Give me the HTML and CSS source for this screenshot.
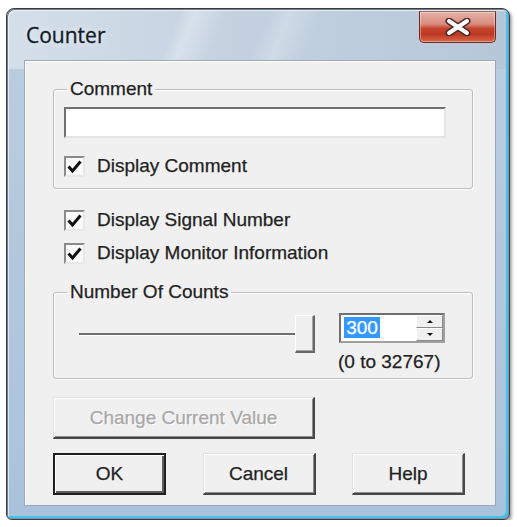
FILE: index.html
```html
<!DOCTYPE html>
<html>
<head>
<meta charset="utf-8">
<link rel="stylesheet" href="styles.css">
</head>
<body>
<div class="window">
  <div class="titlebar">
    <span class="title">Counter</span>
    <div class="close">
      <svg width="26" height="18" viewBox="0 0 26 18">
        <path d="M4 3 L22 15 M22 3 L4 15" stroke="#4a2a26" stroke-width="7" stroke-linecap="round" fill="none"/>
        <path d="M4 3 L22 15 M22 3 L4 15" stroke="#ffffff" stroke-width="4" stroke-linecap="round" fill="none"/>
      </svg>
    </div>
  </div>
  <div class="client">
    <fieldset class="group group-comment">
      <legend>Comment</legend>
      <div class="textbox"></div>
      <label class="check check-first"><span class="box"><svg width="17" height="17" viewBox="0 0 17 17"><path d="M2.5 8.5 L6.5 13 L14.5 3.5" stroke="#111" stroke-width="3" fill="none"/></svg></span>Display Comment</label>
    </fieldset>
    <label class="check row-signal"><span class="box"><svg width="17" height="17" viewBox="0 0 17 17"><path d="M2.5 8.5 L6.5 13 L14.5 3.5" stroke="#111" stroke-width="3" fill="none"/></svg></span>Display Signal Number</label>
    <label class="check row-monitor"><span class="box"><svg width="17" height="17" viewBox="0 0 17 17"><path d="M2.5 8.5 L6.5 13 L14.5 3.5" stroke="#111" stroke-width="3" fill="none"/></svg></span>Display Monitor Information</label>
    <fieldset class="group group-counts">
      <legend>Number Of Counts</legend>
      <div class="counts-row">
        <div class="slider"><div class="track"></div><div class="thumb"></div></div>
        <div class="spin-col">
          <div class="spin">
            <div class="value"><span class="sel">300</span></div>
            <div class="spin-btns"><div class="spin-up"></div><div class="spin-down"></div></div>
          </div>
          <div class="range">(0 to 32767)</div>
        </div>
      </div>
    </fieldset>
    <div class="btn disabled wide">Change Current Value</div>
    <div class="btn-row">
      <div class="btn default">OK</div>
      <div class="btn">Cancel</div>
      <div class="btn">Help</div>
    </div>
  </div>
</div>
</body>
</html>
```
FILE: styles.css
```css
html, body {
  margin: 0;
  background: #fff;
}
body {
  font-family: "Liberation Sans", Arial, sans-serif;
  font-size: 19px;
  color: #222;
  -webkit-text-stroke: 0.25px #222;
}
.window {
  margin: 8px 0 0 6px;
  width: 504px;
  height: 512px;
  box-sizing: border-box;
  border: 1px solid #3c3c3c;
  border-radius: 8px 8px 6px 6px;
  padding: 0 13px 13px 17px;
  display: flex;
  flex-direction: column;
  background:
    linear-gradient(112deg, rgba(255,255,255,0) 0 33%, rgba(255,255,255,.30) 36%, rgba(255,255,255,0) 42%, rgba(255,255,255,0) 50%, rgba(255,255,255,.22) 54%, rgba(255,255,255,0) 60%) 0 0 / 100% 60px no-repeat,
    linear-gradient(to right, #d4dfe9 0%, #c4d2e0 45%, #b6c7d9 100%) 0 0 / 100% 60px no-repeat,
    linear-gradient(to bottom, #bccddf 0%, #a9c2dc 100%);
  box-shadow:
    inset 1px 1px 0 #6f7c8a,
    inset 2px 2px 0 rgba(255,255,255,.6),
    inset -1px -1px 0 #7e97b3,
    inset -3px -3px 0 #3fc3ea,
    2px 2px 3px rgba(0,0,0,.35);
}
.titlebar {
  height: 51px;
  flex: none;
  display: flex;
  align-items: flex-start;
  justify-content: space-between;
}
.title {
  margin: 12px 0 0 2px;
  font-family: "Open Sans", "Noto Sans", sans-serif;
  font-size: 21px;
  line-height: 28px;
  color: #101a28;
  -webkit-text-stroke: 0.3px #101a28;
  text-shadow: 0 0 6px rgba(255,255,255,.9);
}
.close {
  width: 77px;
  height: 32px;
  margin-top: 2px;
  box-sizing: border-box;
  border: 1px solid #6b2c24;
  border-top-color: #9a6a62;
  border-radius: 0 0 5px 5px;
  background: linear-gradient(to bottom, #e6b0a6 0%, #d98d7e 40%, #c5432e 55%, #bf3a24 75%, #d8694b 100%);
  box-shadow: inset 0 0 0 1px rgba(255,255,255,.35);
  display: flex;
  align-items: center;
  justify-content: center;
}
.client {
  flex: 1;
  border: 1px solid #9aa8b8;
  background: #f0f0f0;
  box-shadow: inset 1px 1px 0 #fff;
  padding: 17px 22px 0 28px;
  display: flex;
  flex-direction: column;
  align-items: flex-start;
}
.group {
  margin: 0;
  width: 420px;
  box-sizing: border-box;
  border: 1px solid #bcbcbc;
  border-radius: 3px;
  box-shadow: 1px 1px 0 #fff, inset 1px 1px 0 #fff;
  padding: 0 10px 11px 10px;
}
.group legend {
  padding: 0 3px;
  margin-left: 3px;
  line-height: 22px;
}
.textbox {
  margin-top: 7px;
  width: 382px;
  height: 31px;
  box-sizing: border-box;
  background: #fff;
  border: 2px solid;
  border-color: #707070 #e4e4e4 #e4e4e4 #707070;
}
.check {
  display: flex;
  align-items: center;
  height: 22px;
  line-height: 22px;
  gap: 12px;
}
.check-first {
  margin-top: 17px;
}
.box {
  width: 21px;
  height: 21px;
  box-sizing: border-box;
  border: 2px solid;
  border-color: #8a8a8a #e8e8e8 #e8e8e8 #8a8a8a;
  background: #fafafa;
  display: flex;
  align-items: center;
  justify-content: center;
}
.row-signal {
  margin: 20px 0 0 11px;
}
.row-monitor {
  margin: 11px 0 0 11px;
}
.group-counts {
  margin-top: 17px;
  padding-bottom: 5px;
}
.counts-row {
  display: flex;
  align-items: flex-start;
  margin-left: 15px;
}
.slider {
  width: 236px;
  height: 38px;
  margin-top: 12px;
  display: flex;
  align-items: center;
}
.track {
  flex: 1;
  height: 3px;
  box-sizing: border-box;
  border-top: 2px solid #6f6f6f;
  border-bottom: 1px solid #fff;
}
.thumb {
  width: 20px;
  height: 38px;
  box-sizing: border-box;
  background: #f0f0f0;
  border-style: solid;
  border-width: 1px 2px 2px 1px;
  border-color: #fff #676767 #676767 #fff;
  box-shadow: inset -1px -1px 0 #a8a8a8;
}
.spin-col {
  margin: 10px 0 0 23px;
  display: flex;
  flex-direction: column;
  align-items: center;
}
.spin {
  width: 106px;
  height: 30px;
  box-sizing: border-box;
  border: 2px solid;
  border-color: #6f6f6f #a0a0a0 #a0a0a0 #6f6f6f;
  background: #fff;
  display: flex;
}
.value {
  flex: 1;
  padding: 2px 0 0 3px;
}
.sel {
  display: inline-block;
  background: #3399ff;
  color: #fff;
  -webkit-text-stroke: 0.25px #fff;
  line-height: 21px;
  padding: 0 2px;
}
.spin-btns {
  width: 27px;
  display: flex;
  flex-direction: column;
}
.spin-up, .spin-down {
  flex: 1;
  box-sizing: border-box;
  background: #f0f0f0;
  border: 1px solid;
  border-color: #fff #8a8a8a #8a8a8a #fff;
  display: flex;
  align-items: center;
  justify-content: center;
}
.spin-up::after {
  content: "";
  border-left: 3px solid transparent;
  border-right: 3px solid transparent;
  border-bottom: 3px solid #111;
}
.spin-down::after {
  content: "";
  border-left: 3px solid transparent;
  border-right: 3px solid transparent;
  border-top: 3px solid #111;
}
.range {
  margin: 8px 6px 0 0;
  line-height: 22px;
}
.btn {
  width: 113px;
  height: 42px;
  box-sizing: border-box;
  display: flex;
  align-items: center;
  justify-content: center;
  background: #f0f0f0;
  border-style: solid;
  border-width: 1px 2px 2px 1px;
  border-color: #e2e2e2 #474747 #474747 #e2e2e2;
  box-shadow: inset 1px 1px 0 #fff, inset -1px -1px 0 #8c8c8c;
}
.wide {
  width: 262px;
  margin-top: 18px;
}
.disabled {
  color: #a8a8a8;
  -webkit-text-stroke: 0.25px #a8a8a8;
  text-shadow: 1px 1px 0 #fff;
}
.btn-row {
  margin-top: 14px;
  width: 412px;
  display: flex;
  justify-content: space-between;
}
.default {
  border: 2px solid #1f1f1f;
  box-shadow: inset 1px 1px 0 #fff, inset -2px -2px 0 #5e5e5e;
}
```
